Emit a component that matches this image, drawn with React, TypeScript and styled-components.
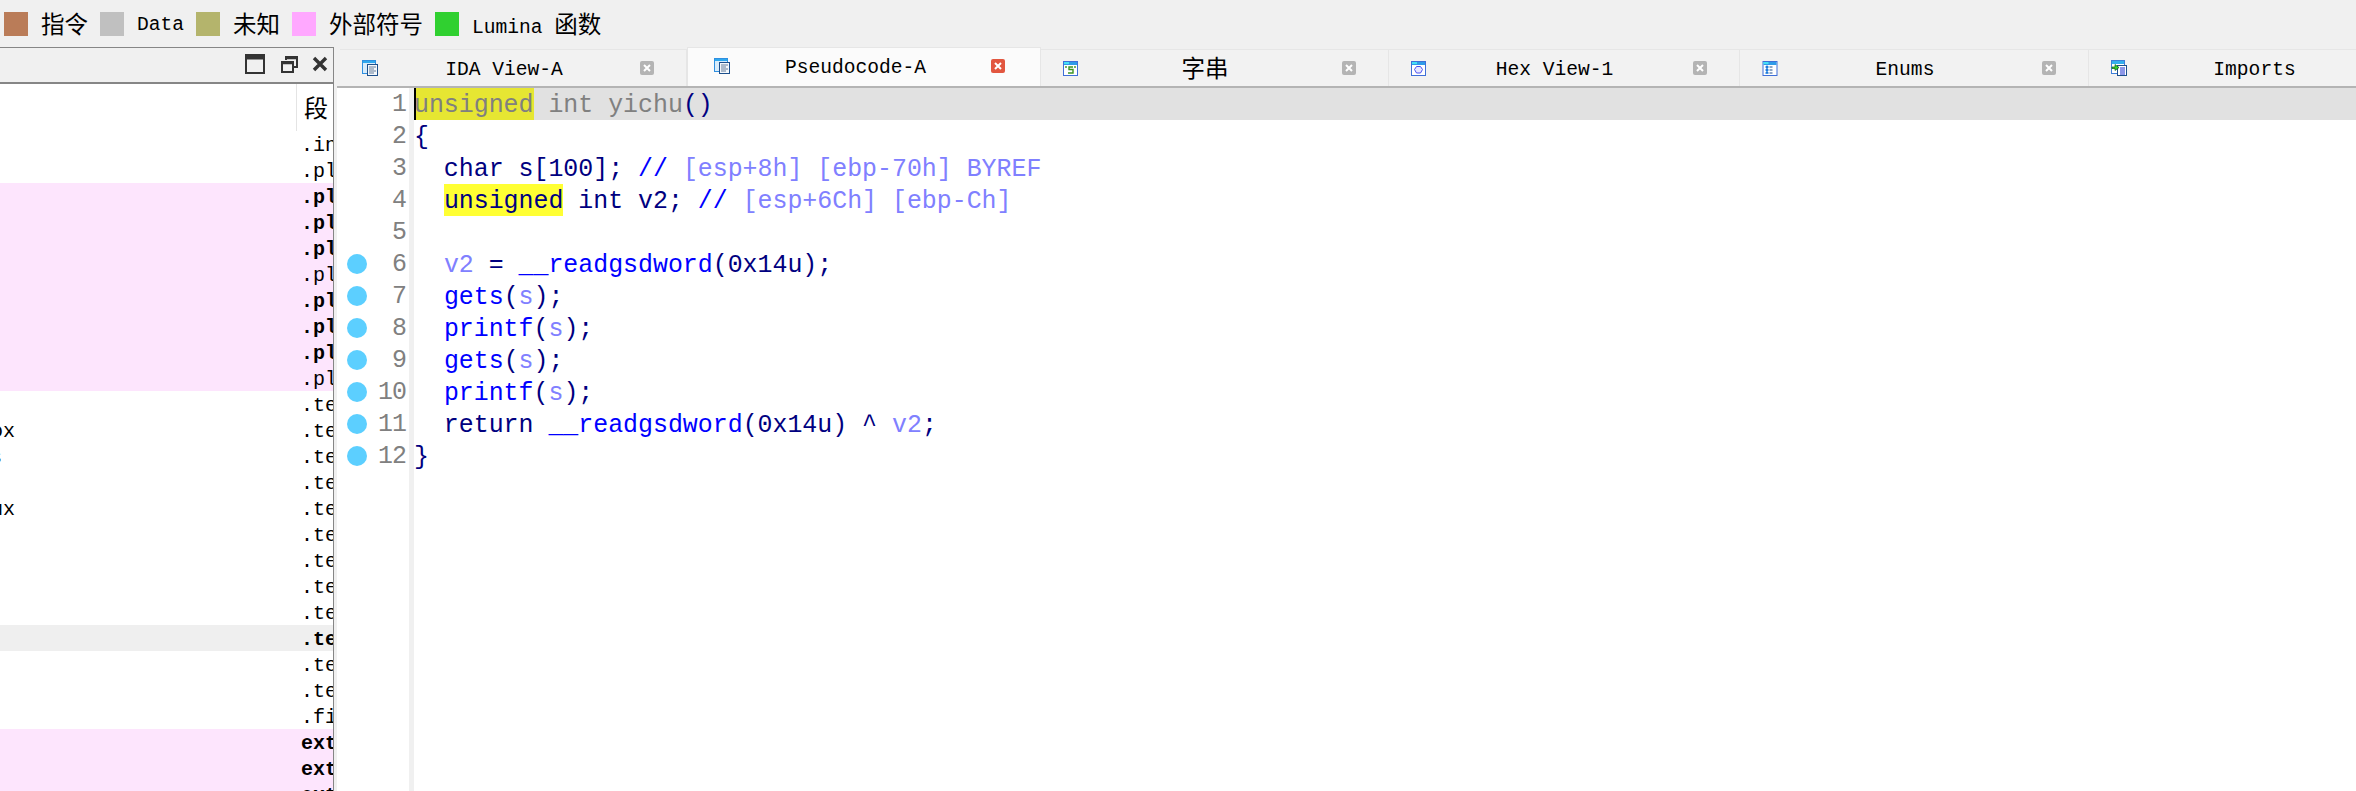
import React from 'react';
import styled, { createGlobalStyle } from 'styled-components';

const GlobalStyle = createGlobalStyle`
    html, body {
        margin: 0;
        padding: 0;
        height: 100%;
        overflow: hidden;
        background: #f0f0f0;
    }
    * {
        box-sizing: border-box;
    }
`;

const uiFont = `"Liberation Mono", "Noto Sans CJK SC", monospace`;

const Page = styled.div`
    width: 2356px;
    height: 791px;
    display: flex;
    flex-direction: column;
    overflow: hidden;
    font-family: ${uiFont};
    color: #000;
`;

const Legend = styled.div`
    height: 47px;
    flex: none;
    display: flex;
    align-items: center;
    gap: 12px;
    padding: 1px 0 0 4px;
    background: #f0f0f0;
`;

const LegendItem = styled.div`
    display: flex;
    align-items: center;
    gap: 13px;
`;

const Swatch = styled.span<{ $color: string }>`
    width: 24px;
    height: 24px;
    background: ${(p) => p.$color};
`;

const UiLabel = styled.span`
    padding-top: 2px;
    font-size: 19.6px;
    line-height: 24px;
    white-space: pre;
`;

const Cjk = styled.span`
    font-family: "Noto Sans CJK SC", sans-serif;
    font-size: 23.5px;
    font-weight: 400;
`;

const Workspace = styled.div`
    flex: 1;
    min-height: 0;
    display: flex;
`;

const SegmentsPanel = styled.div`
    width: 334px;
    flex: none;
    display: flex;
    flex-direction: column;
    border-right: 1px solid #868686;
    overflow: hidden;
`;

const PanelTitle = styled.div`
    height: 33px;
    flex: none;
    display: flex;
    align-items: center;
    justify-content: flex-end;
    gap: 14px;
    padding-right: 5px;
    background: #f0f0f0;
    border-top: 1px solid #868686;
`;

const TableHead = styled.div`
    height: 49px;
    flex: none;
    display: grid;
    grid-template-columns: 297px 1fr;
    margin-top: 2px;
    background: #fff;
    border-top: 2px solid #868686;
`;

const HeadCell = styled.div`
    border-right: 1px solid #e4e4e4;
`;

const HeadTitle = styled.div`
    padding: 8px 0 0 7px;
    font-family: "Noto Sans CJK SC", sans-serif;
    font-size: 24px;
    line-height: 30px;
    font-weight: 400;
`;

const TableBody = styled.div`
    flex: 1;
    min-height: 0;
    overflow: hidden;
    background: #fff;
`;

const SegmentRow = styled.div<{ $bg: string }>`
    height: 26px;
    display: grid;
    grid-template-columns: 297px 1fr;
    background: ${(p) => p.$bg};
    font-size: 20px;
    line-height: 30px;
    overflow: hidden;
`;

const SegmentName = styled.div<{ $shift: number }>`
    overflow: hidden;
    white-space: pre;
    text-indent: ${(p) => p.$shift}px;
`;

const SegmentCell = styled.div<{ $bold: boolean }>`
    padding-left: 4px;
    overflow: hidden;
    white-space: pre;
    font-weight: ${(p) => (p.$bold ? 700 : 400)};
`;

const Splitter = styled.div`
    width: 3px;
    flex: none;
    background: #f0f0f0;
`;

const MainPanel = styled.div`
    flex: 1;
    min-width: 0;
    display: flex;
    flex-direction: column;
    background: #fff;
`;

const TabBar = styled.div`
    height: 41px;
    flex: none;
    display: flex;
    padding-left: 3px;
    background: #f0f0f0;
    border-bottom: 2px solid #b4b4b4;
    overflow: hidden;
`;

const Tab = styled.div<{ $width: number; $active: boolean }>`
    width: ${(p) => p.$width}px;
    flex: none;
    display: flex;
    align-items: center;
    margin-top: ${(p) => (p.$active ? 0 : 2)}px;
    padding: 0 ${(p) => (p.$active ? 35 : 32)}px ${(p) => (p.$active ? 2 : 0)}px ${(p) => (p.$active ? 26 : 22)}px;
    background: ${(p) => (p.$active ? '#fbfbfb' : '#f2f2f2')};
    border-top: 1px solid #e6e6e6;
    border-right: 1px solid #e6e6e6;
    border-left: ${(p) => (p.$active ? '1px solid #e6e6e6' : 'none')};
`;

const TabLabel = styled.span`
    flex: 1;
    padding: 3px 10px 0 0;
    text-align: center;
    font-size: 19.6px;
    line-height: 24px;
    white-space: pre;
`;

const CloseBox = styled.span<{ $active: boolean }>`
    width: 14px;
    height: 14px;
    flex: none;
    display: flex;
    align-items: center;
    justify-content: center;
    border-radius: 2px;
    background: ${(p) => (p.$active ? '#e2563f' : '#b4b4b4')};
`;

const Editor = styled.div`
    flex: 1;
    min-height: 0;
    display: flex;
    font-family: "Liberation Mono", monospace;
    font-size: 24.9px;
    line-height: 32px;
`;

const Gutter = styled.div`
    width: 77px;
    flex: none;
    border-right: 5px solid #f0f0f0;
    background: #fff;
`;

const GutterRow = styled.div`
    height: 32px;
    display: flex;
    align-items: center;
    justify-content: flex-end;
    padding: 0 3px 0 10px;
    color: #808080;
    letter-spacing: -0.9px;
`;

const BreakDot = styled.span`
    width: 20px;
    height: 20px;
    margin-right: auto;
    border-radius: 50%;
    background: #5ccfff;
`;

const CodeColumn = styled.div`
    flex: 1;
    min-width: 0;
`;

const CodeLine = styled.div<{ $current: boolean }>`
    position: relative;
    height: 32px;
    white-space: pre;
    color: #000080;
    background: ${(p) => (p.$current ? '#e1e1e1' : 'transparent')};
`;

const Caret = styled.span`
    position: absolute;
    left: 0;
    top: 0;
    width: 2px;
    height: 32px;
    background: #000;
`;

const Token = styled.span<{ $color?: string; $mark?: string }>`
    display: inline-block;
    height: 32px;
    line-height: 34px;
    vertical-align: top;
    color: ${(p) => p.$color ?? 'inherit'};
    background: ${(p) => p.$mark ?? 'transparent'};
`;

const GRAY = '#808080';
const BLUE = '#0000ff';
const LILAC = '#8080ff';
const NAVY = '#000080';

const legend: { color: string; label: React.ReactNode }[] = [
    { color: '#ba7c58', label: <Cjk>指令</Cjk> },
    { color: '#c0c0c0', label: 'Data' },
    { color: '#b4b46c', label: <Cjk>未知</Cjk> },
    { color: '#ffa8ff', label: <Cjk>外部符号</Cjk> },
    { color: '#30d030', label: <>Lumina <Cjk>函数</Cjk></> },
];

type TabIconKind = 'doc' | 'str' | 'hex' | 'enum' | 'imp';

const tabs: { label: React.ReactNode; icon: TabIconKind; width: number; active?: boolean }[] = [
    { label: 'IDA View-A', icon: 'doc', width: 347 },
    { label: 'Pseudocode-A', icon: 'doc', width: 354, active: true },
    { label: <Cjk>字串</Cjk>, icon: 'str', width: 348 },
    { label: 'Hex View-1', icon: 'hex', width: 351 },
    { label: 'Enums', icon: 'enum', width: 349 },
    { label: 'Imports', icon: 'imp', width: 350 },
];

const PINK = '#fde5fd';
const segments: { name?: string; shift?: number; seg: string; bold?: boolean; bg?: string }[] = [
    { seg: '.init' },
    { seg: '.plt' },
    { seg: '.plt', bold: true, bg: PINK },
    { seg: '.plt', bold: true, bg: PINK },
    { seg: '.plt', bold: true, bg: PINK },
    { seg: '.plt', bg: PINK },
    { seg: '.plt', bold: true, bg: PINK },
    { seg: '.plt', bold: true, bg: PINK },
    { seg: '.plt', bold: true, bg: PINK },
    { seg: '.plt', bg: PINK },
    { seg: '.text' },
    { name: 'ox', shift: -9, seg: '.text' },
    { name: 's', shift: -10, seg: '.text' },
    { seg: '.text' },
    { name: 'ux', shift: -9, seg: '.text' },
    { seg: '.text' },
    { seg: '.text' },
    { seg: '.text' },
    { seg: '.text' },
    { seg: '.text', bold: true, bg: '#efefef' },
    { seg: '.text' },
    { seg: '.text' },
    { seg: '.fini' },
    { seg: 'extern', bold: true, bg: PINK },
    { seg: 'extern', bold: true, bg: PINK },
    { seg: 'extern', bold: true, bg: PINK },
];

type Part = { t: string; c?: string; m?: string };

const code: Part[][] = [
    [{ t: 'unsigned', c: GRAY, m: '#e6e632' }, { t: ' int yichu', c: GRAY }, { t: '()' }],
    [{ t: '{' }],
    [{ t: '  char s[100]; ' }, { t: '// ', c: BLUE }, { t: '[esp+8h] [ebp-70h] BYREF', c: LILAC }],
    [{ t: '  ' }, { t: 'unsigned', m: '#ffff33' }, { t: ' int v2; ' }, { t: '// ', c: BLUE }, { t: '[esp+6Ch] [ebp-Ch]', c: LILAC }],
    [{ t: ' ' }],
    [{ t: '  ' }, { t: 'v2', c: LILAC }, { t: ' = ' }, { t: '__readgsdword', c: BLUE }, { t: '(0x14u);' }],
    [{ t: '  ' }, { t: 'gets', c: BLUE }, { t: '(' }, { t: 's', c: LILAC }, { t: ');' }],
    [{ t: '  ' }, { t: 'printf', c: BLUE }, { t: '(' }, { t: 's', c: LILAC }, { t: ');' }],
    [{ t: '  ' }, { t: 'gets', c: BLUE }, { t: '(' }, { t: 's', c: LILAC }, { t: ');' }],
    [{ t: '  ' }, { t: 'printf', c: BLUE }, { t: '(' }, { t: 's', c: LILAC }, { t: ');' }],
    [{ t: '  return ' }, { t: '__readgsdword', c: BLUE }, { t: '(0x14u) ^ ' }, { t: 'v2', c: LILAC }, { t: ';' }],
    [{ t: '}' }],
];

const WindowFrame: React.FC = () => (
    <>
        <rect x="0.5" y="0.5" width="14" height="14" fill="#fff" stroke="#3f6fd8" />
        <rect x="1" y="1" width="13" height="3" fill="#2f9be8" />
        <rect x="1" y="1" width="5" height="2" fill="#45e0f5" />
    </>
);

const TabIcon: React.FC<{ kind: TabIconKind }> = ({ kind }) => {
    if (kind === 'doc') {
        return (
            <svg width="16" height="16" viewBox="0 0 16 16" style={{ flex: 'none' }}>
                <rect x="0.5" y="0.5" width="13" height="13" fill="#d8ecfb" stroke="#2f8fe0" />
                <rect x="1" y="1" width="12" height="2" fill="#2fa8ee" />
                <rect x="5.5" y="4.5" width="10" height="11" fill="#f4f8fc" stroke="#1d4f8c" />
                <path d="M7 7h7M7 9h5M7 11h7M7 13h5" stroke="#667d99" strokeWidth="1" />
            </svg>
        );
    }
    if (kind === 'str') {
        return (
            <svg width="15" height="15" viewBox="0 0 15 15" style={{ flex: 'none' }}>
                <WindowFrame />
                <path d="M3 5v2M12 5v2M10 6H6v2.500h4V12H5" fill="none" stroke="#3c9420" strokeWidth="1.400" />
            </svg>
        );
    }
    if (kind === 'hex') {
        return (
            <svg width="15" height="15" viewBox="0 0 15 15" style={{ flex: 'none' }}>
                <WindowFrame />
                <path d="M5.500 5.500h4l2 3-2 3.500h-4l-2-3.500z" fill="#e6e6ff" stroke="#4a50f0" />
            </svg>
        );
    }
    if (kind === 'enum') {
        return (
            <svg width="16" height="15" viewBox="0 0 15 15" style={{ flex: 'none' }}>
                <WindowFrame />
                <path d="M4.500 4.500v8M3 6h3M3 9h3M3 12h3" stroke="#0a6fd8" strokeWidth="1.300" />
                <path d="M7 6h3M7 9h3M7 12h3" stroke="#1d4f8c" />
            </svg>
        );
    }
    return (
        <svg width="16" height="16" viewBox="0 0 16 16" style={{ flex: 'none' }}>
            <rect x="0.5" y="0.5" width="13" height="13" fill="#fff" stroke="#3f7fd8" />
            <rect x="1" y="1" width="12" height="3" fill="#34b0ee" />
            <rect x="6.500" y="5.500" width="9" height="10" fill="#fff" stroke="#1d4f8c" />
            <path d="M9 8h5M9 10h5M9 12h5M9 14h5" stroke="#1b2fd0" />
            <path d="M1 7h3V4.500L8 7.500 4 10.500V8.500H1z" fill="#35d035" stroke="#0f5f0f" strokeWidth="0.700" />
        </svg>
    );
};

const CloseIcon: React.FC = () => (
    <svg width="8" height="8" viewBox="0 0 8 8">
        <path d="M1 1l6 6M7 1L1 7" stroke="#fff" strokeWidth="2" />
    </svg>
);

const App: React.FC = () => {
    return (
        <Page>
            <GlobalStyle />
            <Legend>
                {legend.map((item) => (
                    <LegendItem key={item.color}>
                        <Swatch $color={item.color} />
                        <UiLabel>{item.label}</UiLabel>
                    </LegendItem>
                ))}
            </Legend>
            <Workspace>
                <SegmentsPanel>
                    <PanelTitle>
                        <svg width="20" height="20" viewBox="0 0 20 20">
                            <path d="M1 1h18v18H1z" fill="none" stroke="#333" strokeWidth="2" />
                            <path d="M1 3.500h18" stroke="#333" strokeWidth="4" />
                        </svg>
                        <svg width="17" height="17" viewBox="0 0 17 17" style={{ marginLeft: 2 }}>
                            <path d="M5 4V1h11v10h-4" fill="none" stroke="#333" strokeWidth="2" />
                            <path d="M1 6h11v10H1z" fill="none" stroke="#333" strokeWidth="2" />
                            <path d="M5 2h11M1 7h11" stroke="#333" strokeWidth="2.500" />
                        </svg>
                        <svg width="16" height="16" viewBox="0 0 16 16">
                            <path d="M2 2l12 12M14 2L2 14" stroke="#333" strokeWidth="3.400" />
                        </svg>
                    </PanelTitle>
                    <TableHead>
                        <HeadCell />
                        <HeadTitle>段</HeadTitle>
                    </TableHead>
                    <TableBody>
                        {segments.map((row, i) => (
                            <SegmentRow key={i} $bg={row.bg ?? '#fff'}>
                                <SegmentName $shift={row.shift ?? 0}>{row.name}</SegmentName>
                                <SegmentCell $bold={!!row.bold}>{row.seg}</SegmentCell>
                            </SegmentRow>
                        ))}
                    </TableBody>
                </SegmentsPanel>
                <Splitter />
                <MainPanel>
                    <TabBar>
                        {tabs.map((tab) => (
                            <Tab key={tab.width} $width={tab.width} $active={!!tab.active}>
                                <TabIcon kind={tab.icon} />
                                <TabLabel>{tab.label}</TabLabel>
                                <CloseBox $active={!!tab.active}>
                                    <CloseIcon />
                                </CloseBox>
                            </Tab>
                        ))}
                    </TabBar>
                    <Editor>
                        <Gutter>
                            {code.map((_, i) => (
                                <GutterRow key={i}>
                                    {i >= 5 && <BreakDot />}
                                    {i + 1}
                                </GutterRow>
                            ))}
                        </Gutter>
                        <CodeColumn>
                            {code.map((parts, i) => (
                                <CodeLine key={i} $current={i === 0}>
                                    {i === 0 && <Caret />}
                                    {parts.map((part, j) => (
                                        <Token key={j} $color={part.c ?? NAVY} $mark={part.m}>
                                            {part.t}
                                        </Token>
                                    ))}
                                </CodeLine>
                            ))}
                        </CodeColumn>
                    </Editor>
                </MainPanel>
            </Workspace>
        </Page>
    );
};

export default App;
